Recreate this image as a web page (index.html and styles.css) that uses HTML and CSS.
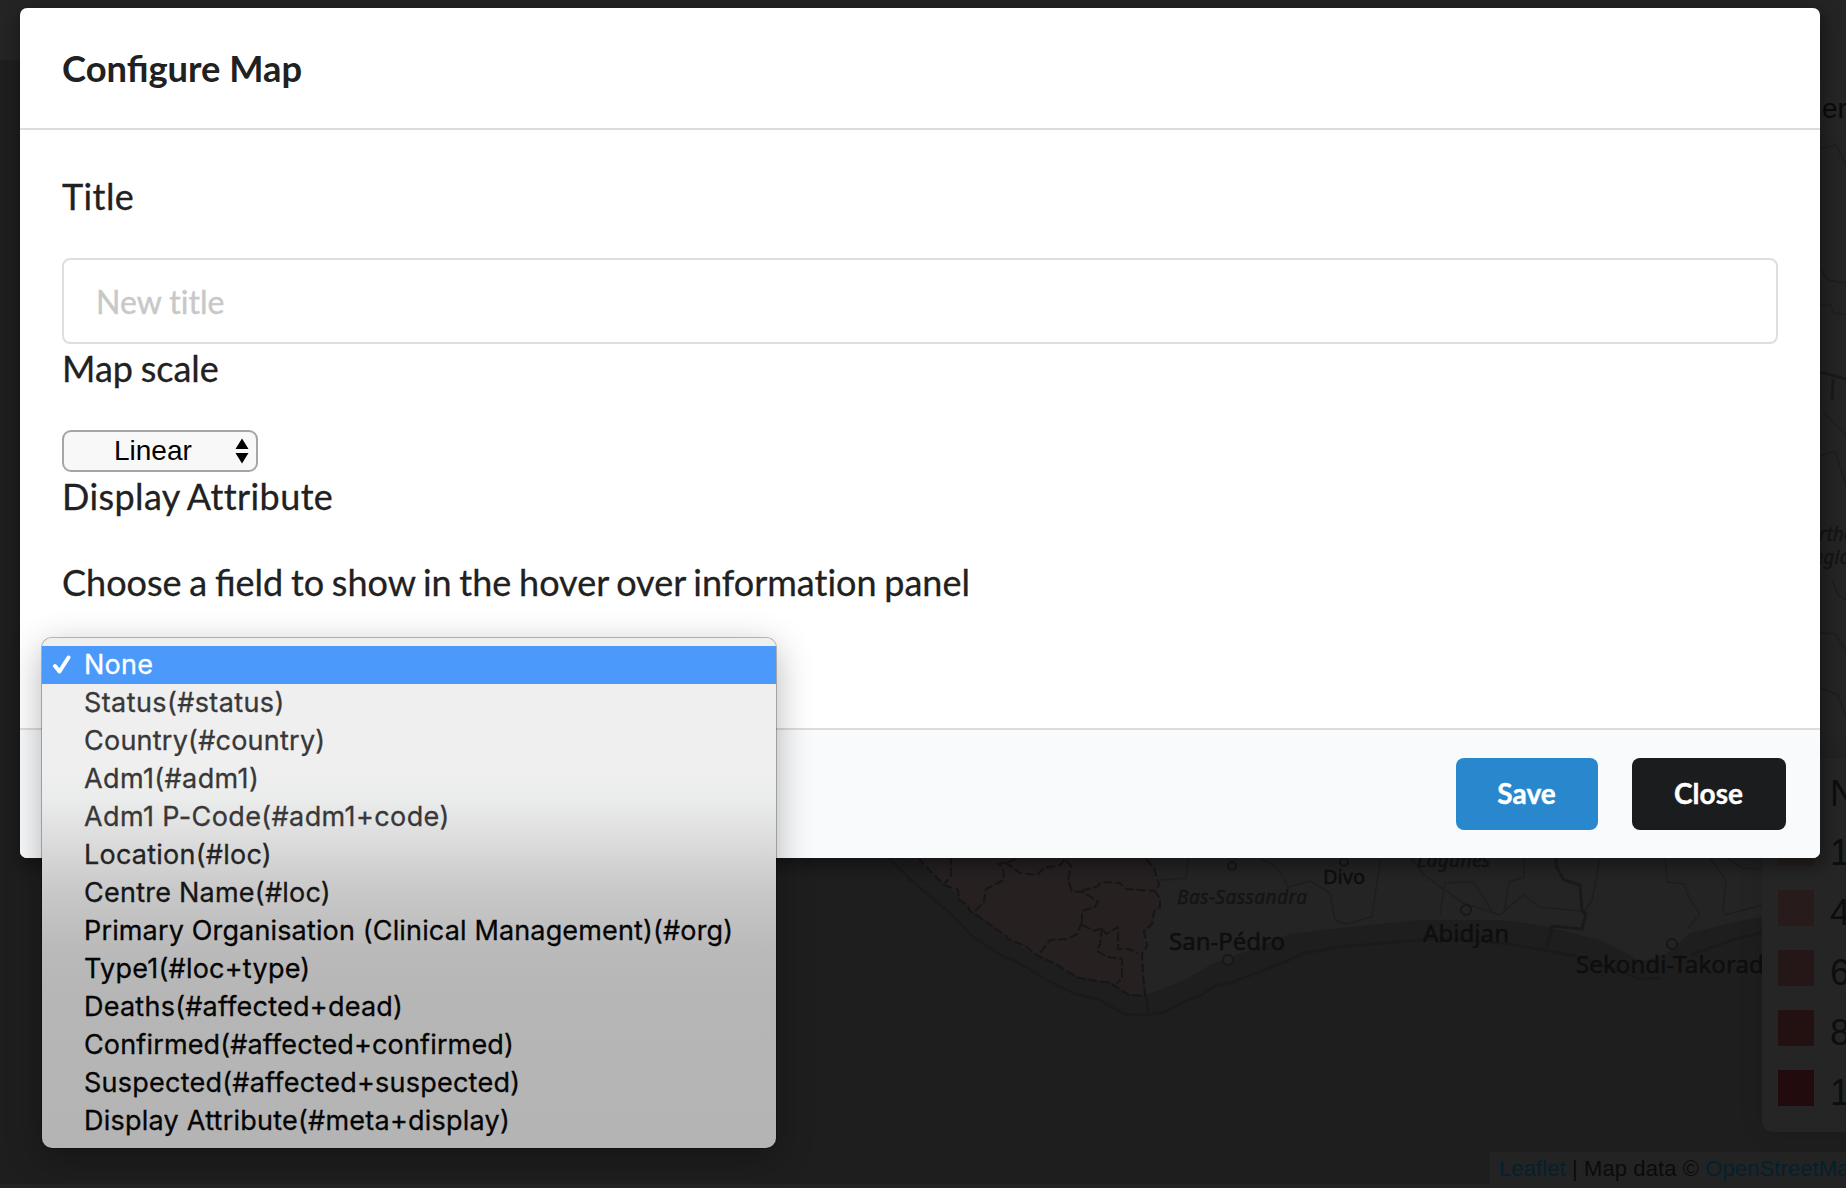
FILE: index.html
```html
<!DOCTYPE html>
<html lang="en">
<head>
<meta charset="utf-8">
<title>Configure Map</title>
<link rel="stylesheet" href="styles.css">
</head>
<body>
<svg class="map" width="1846" height="1188" viewBox="0 0 1846 1188" aria-hidden="true">
  <rect width="1846" height="60" fill="#242424"/>
  <rect y="1184" width="1846" height="4" fill="#232323"/>
  <path class="land" d="M915 858L944 885L958 895L969 908L975 913L1005 936L1025 950L1037 955L1056 964L1075 970L1111 974L1128 985L1144 995L1160 990L1185 980L1210 965L1250 950L1290 934L1340 928L1420 920L1500 920L1540 925L1600 940L1628 954L1640 962L1665 955L1690 933L1740 921L1762 917L1846 890V60H1820V858Z"/>
  <path class="region" d="M918 858L944 885L958 895L969 908L975 913L1005 936L1025 950L1037 955L1056 964L1067 972L1080 978L1111 982L1128 994L1146 996L1142 955L1144 934L1152 924L1160 903L1155 880L1150 858Z"/>
  <path class="border" d="M918 858L944 885L951 875V858M944 885L958 890L959 900L968 905L969 910L1005 935L1008 939L1025 946L1038 956L1056 964L1065 970L1079 978L1110 983L1129 995L1145 996L1143 975L1142 953L1147 946L1144 931L1152 924L1154 911L1160 907V899L1155 891L1159 885L1154 868L1145 858"/>
  <path class="border" d="M975 911L984 902L986 889L1000 882L1004 880L1003 869L999 864L1008 862L1020 858M1005 862L1020 873L1037 875L1044 868L1060 865L1065 859L1071 866L1068 881L1072 891L1082 892L1098 901L1095 907L1082 911V925L1094 931L1102 928L1106 934L1118 927V949L1129 949L1138 953M1082 891L1098 886L1101 882L1120 883L1126 889L1154 891M1082 922L1077 934L1067 939L1050 940L1038 956M1102 928L1100 944L1097 951L1107 957L1122 959V977L1117 984"/>
  <path class="sealine" d="M889 858L912 881L950 913L973 937L1004 957L1014 960L1047 980L1075 994L1098 999L1124 1014L1146 1015L1165 1012L1185 1001L1202 995L1214 986L1230 983L1275 966L1305 953L1340 947L1440 938L1510 944L1580 957L1640 979L1661 978M1146 996L1148 1015M1690 955L1735 939L1762 933L1780 925"/>
  <path class="road" d="M1160 880L1186 878L1188 858M1260 858L1278 868L1288 887L1310 881L1330 893L1335 920L1346 924L1372 917L1375 896L1381 858M1411 858L1424 875L1463 903L1500 915L1523 895L1540 907L1580 911M1440 915L1445 883L1474 882L1492 911M1504 912L1509 882L1524 877V858M1600 858L1592 900L1584 912M1665 858L1667 882L1684 884L1690 900L1700 914L1688 928M1710 858L1726 880L1723 911M1727 858L1742 868L1762 869M1725 915L1762 905M1820 149L1836 145L1846 165M1820 268L1828 280L1846 283M1820 305L1831 305L1833 313L1846 314M1824 413L1846 435M1820 456L1835 451L1846 485M1832 580L1838 595L1846 600M1820 633L1835 634L1846 650M1820 688L1838 695L1846 717"/>
  <path class="country-border" d="M1556 858V866L1564 880L1580 885L1582 911L1586 914L1582 929L1552 926L1547 946M1820 372L1846 379M1833 379L1832 400"/>
  <g class="towns">
    <circle cx="1228" cy="960" r="5"/><circle cx="1232" cy="866" r="4"/><circle cx="1344" cy="862" r="4"/>
    <circle cx="1466" cy="910" r="5"/><circle cx="1672" cy="944" r="5"/>
  </g>
  <g class="place">
    <text x="1169" y="950" font-size="24" textLength="116">San-Pédro</text>
    <text x="1323" y="884" font-size="20" textLength="42">Divo</text>
    <text x="1423" y="942" font-size="24" textLength="86">Abidjan</text>
    <text x="1576" y="973" font-size="24" textLength="194">Sekondi-Takoradi</text>
  </g>
  <g class="district">
    <text x="1177" y="904" font-size="19" textLength="130">Bas-Sassandra</text>
    <text x="1417" y="867" font-size="19" textLength="73">Lagunes</text>
    <text x="1819" y="541" font-size="19">rthe</text>
    <text x="1814" y="564" font-size="19">egio</text>
  </g>
</svg>

<div class="map-label">er</div>
<div class="legend">
  <div class="legend-title">N</div>
  <div class="legend-row"><i class="swatch s1"></i>1</div>
  <div class="legend-row"><i class="swatch s2"></i>4</div>
  <div class="legend-row"><i class="swatch s3"></i>6</div>
  <div class="legend-row"><i class="swatch s4"></i>8</div>
  <div class="legend-row"><i class="swatch s5"></i>1</div>
</div>
<div class="attribution"><a>Leaflet</a> | Map data © <a>OpenStreetMap</a></div>

<main class="modal">
  <header class="modal-header">Configure Map</header>
  <section class="modal-body">
    <p class="label wide">Title</p>
    <input class="title-input" type="text" placeholder="New title">
    <p class="label">Map scale</p>
    <div class="select"><span>Linear</span>
      <svg width="14" height="26" viewBox="0 0 14 26"><path d="M0.5 11L7 0.5L13.5 11ZM0.5 15H13.5L7 25.5Z"/></svg>
    </div>
    <p class="label wide">Display Attribute</p>
    <p class="label hint">Choose a <span class="ligature">field</span> to show in the hover over information panel</p>
  </section>
  <footer class="modal-footer">
    <button class="btn save">Save</button>
    <button class="btn close">Close</button>
  </footer>
</main>

<ul class="menu">
  <li class="selected"><svg class="check" width="20" height="20" viewBox="0 0 20 20"><path d="M3 11L7.5 16.5L16.5 2.5"/></svg><span>None</span></li>
  <li class="loose"><span>Status(#status)</span></li>
  <li><span>Country(#country)</span></li>
  <li class="loose"><span>Adm1(#adm1)</span></li>
  <li class="loose"><span>Adm1 P-Code(#adm1+code)</span></li>
  <li><span>Location(#loc)</span></li>
  <li><span>Centre Name(#loc)</span></li>
  <li class="long"><span>Primary Organisation (Clinical Management)(#org)</span></li>
  <li><span>Type1(#loc+type)</span></li>
  <li><span>Deaths(#affected+dead)</span></li>
  <li class="long"><span>Confirmed(#affected+confirmed)</span></li>
  <li><span>Suspected(#affected+suspected)</span></li>
  <li><span>Display Attribute(#meta+display)</span></li>
</ul>
</body>
</html>
```
FILE: styles.css
```css
* { box-sizing: border-box; }
body {
  margin: 0;
  padding: 8px 26px 0 20px;
  height: 1188px;
  position: relative;
  overflow: hidden;
  background: #1e1e1e;
  font-family: Lato, sans-serif;
}

/* dimmed map behind the dialog */
.map { position: absolute; left: 0; top: 0; }
.land { fill: #242424; }
.region { fill: #262021; }
.border { fill: none; stroke: #171616; stroke-width: 2; stroke-dasharray: 9 3; }
.sealine { fill: none; stroke: #1a1a1a; stroke-width: 2.5; }
.road { fill: none; stroke: #1e1e1e; stroke-width: 1.5; }
.country-border { fill: none; stroke: #1a1a1a; stroke-width: 3; }
.towns { fill: #242424; stroke: #171717; stroke-width: 2; }
.place { font-family: "Noto Sans", sans-serif; fill: #0e0e0e; stroke: #0e0e0e; stroke-width: .5; }
.district { font-family: "Noto Sans", sans-serif; font-style: italic; fill: #141414; stroke: #141414; stroke-width: .4; }

.map-label {
  position: absolute; left: 1700px; top: 80px; width: 146px; height: 56px;
  padding-left: 122px;
  background: #252525; color: #0a0a0a;
  font: 28px/57px "Liberation Sans", Arial, sans-serif;
}
.legend {
  position: absolute; left: 1762px; top: 758px; width: 150px; height: 374px;
  padding: 12px 16px;
  border-radius: 10px;
  background: #252525; color: #0d0d0d;
  box-shadow: 0 0 24px rgba(0, 0, 0, .12);
  font: 36px/36px "Liberation Sans", Arial, sans-serif;
}
.legend-title { height: 60px; padding: 6px 0 0 52px; }
.legend-row { display: flex; gap: 16px; height: 60px; line-height: 46px; }
.swatch { width: 36px; height: 36px; }
.s1 { background: #261e1d; }
.s2 { background: #281b1b; }
.s3 { background: #251617; }
.s4 { background: #231011; }
.s5 { background: #210b0d; }
.attribution {
  position: absolute; left: 1490px; top: 1152px; width: 400px; height: 32px;
  padding-left: 9px;
  background: #232323; color: #0b0b0b;
  font: 22px/34px "Liberation Sans", Arial, sans-serif;
  letter-spacing: .1px;
  white-space: nowrap;
}
.attribution a { color: #04202c; }

/* dialog */
.modal {
  position: relative;
  display: flex; flex-direction: column;
  height: 850px;
  border-radius: 7px;
  background: #fff;
  color: #212121;
  box-shadow: 2px 6px 14px 4px rgba(0, 0, 0, .3);
  overflow: hidden;
}
.modal-header {
  height: 122px;
  padding: 0 42px;
  border-bottom: 2px solid #dcdcdd;
  font-size: 36.3px; font-weight: 700; line-height: 121px;
}
.modal-body { flex: 1; padding: 42px 42px 0; }
.label {
  height: 49px;
  margin: 0 0 37px;
  font-size: 36px; line-height: 49px;
  font-variant-ligatures: none;
  word-spacing: -1.5px;
  -webkit-text-stroke: .3px;
}
.wide { letter-spacing: .4px; }
.hint { word-spacing: -1.5px; }
.ligature { font-variant-ligatures: normal; }
.title-input {
  display: block;
  width: 100%; height: 86px;
  padding: 0 32px;
  border: 2px solid #dddede; border-radius: 8px;
  font: 32px Lato, sans-serif;
  font-variant-ligatures: none;
  outline: 0;
}
.title-input::placeholder { color: #c8c8c8; opacity: 1; -webkit-text-stroke: .4px; }
.select {
  display: flex; align-items: center; justify-content: space-between;
  width: 196px; height: 42px;
  padding: 0 7px 0 50px;
  border: 2px solid #a5a5a5; border-radius: 9px;
  background: #f8f8f8; color: #000;
  font: 28px/38px "Liberation Sans", Arial, sans-serif;
}
.modal-footer {
  display: flex; justify-content: flex-end; gap: 34px;
  height: 130px;
  padding: 28px 34px 0;
  border-top: 2px solid #dcdcdd;
  background: #f9fafb;
}
.btn {
  height: 72px; padding: 0 1px 2px 0;
  border: 0; border-radius: 8px;
  color: #fff;
  font: 700 28px Lato, sans-serif;
  -webkit-text-stroke: .4px;
}
.save { width: 142px; background: #2987cd; }
.close { width: 154px; background: #1b1c1d; }

/* open option list */
.menu {
  position: absolute; left: 42px; top: 638px;
  width: 734px; height: 510px;
  margin: 0; padding: 8px 0; list-style: none;
  border-radius: 10px;
  background: linear-gradient(#efefef 0, #efefef 130px, #ebecec 160px, #d9d9d9 210px, #c8c8c8 255px, #bababa 310px, #b6b6b6 360px, #b4b4b4 100%);
  box-shadow: 0 0 0 1px rgba(0, 0, 0, .25), 0 10px 36px rgba(0, 0, 0, .3);
  color: #050505;
  font: 27px/38px Inter, sans-serif;
  letter-spacing: .24px;
  -webkit-text-stroke: .3px;
}
.menu li { display: flex; height: 38px; padding-left: 42px; position: relative; white-space: nowrap; }
.menu .loose { letter-spacing: .4px; }
.menu .long { letter-spacing: .15px; }
.menu li:nth-child(-n+5) { color: #383838; }
.menu li:nth-child(6) { color: #242424; }
.menu li:nth-child(7) { color: #151515; }
.menu .selected { background: #4a99fb; color: #fff !important; }
.check { position: absolute; left: 10px; top: 9px; fill: none; stroke: #fff; stroke-width: 4; stroke-linecap: round; stroke-linejoin: round; }
```
